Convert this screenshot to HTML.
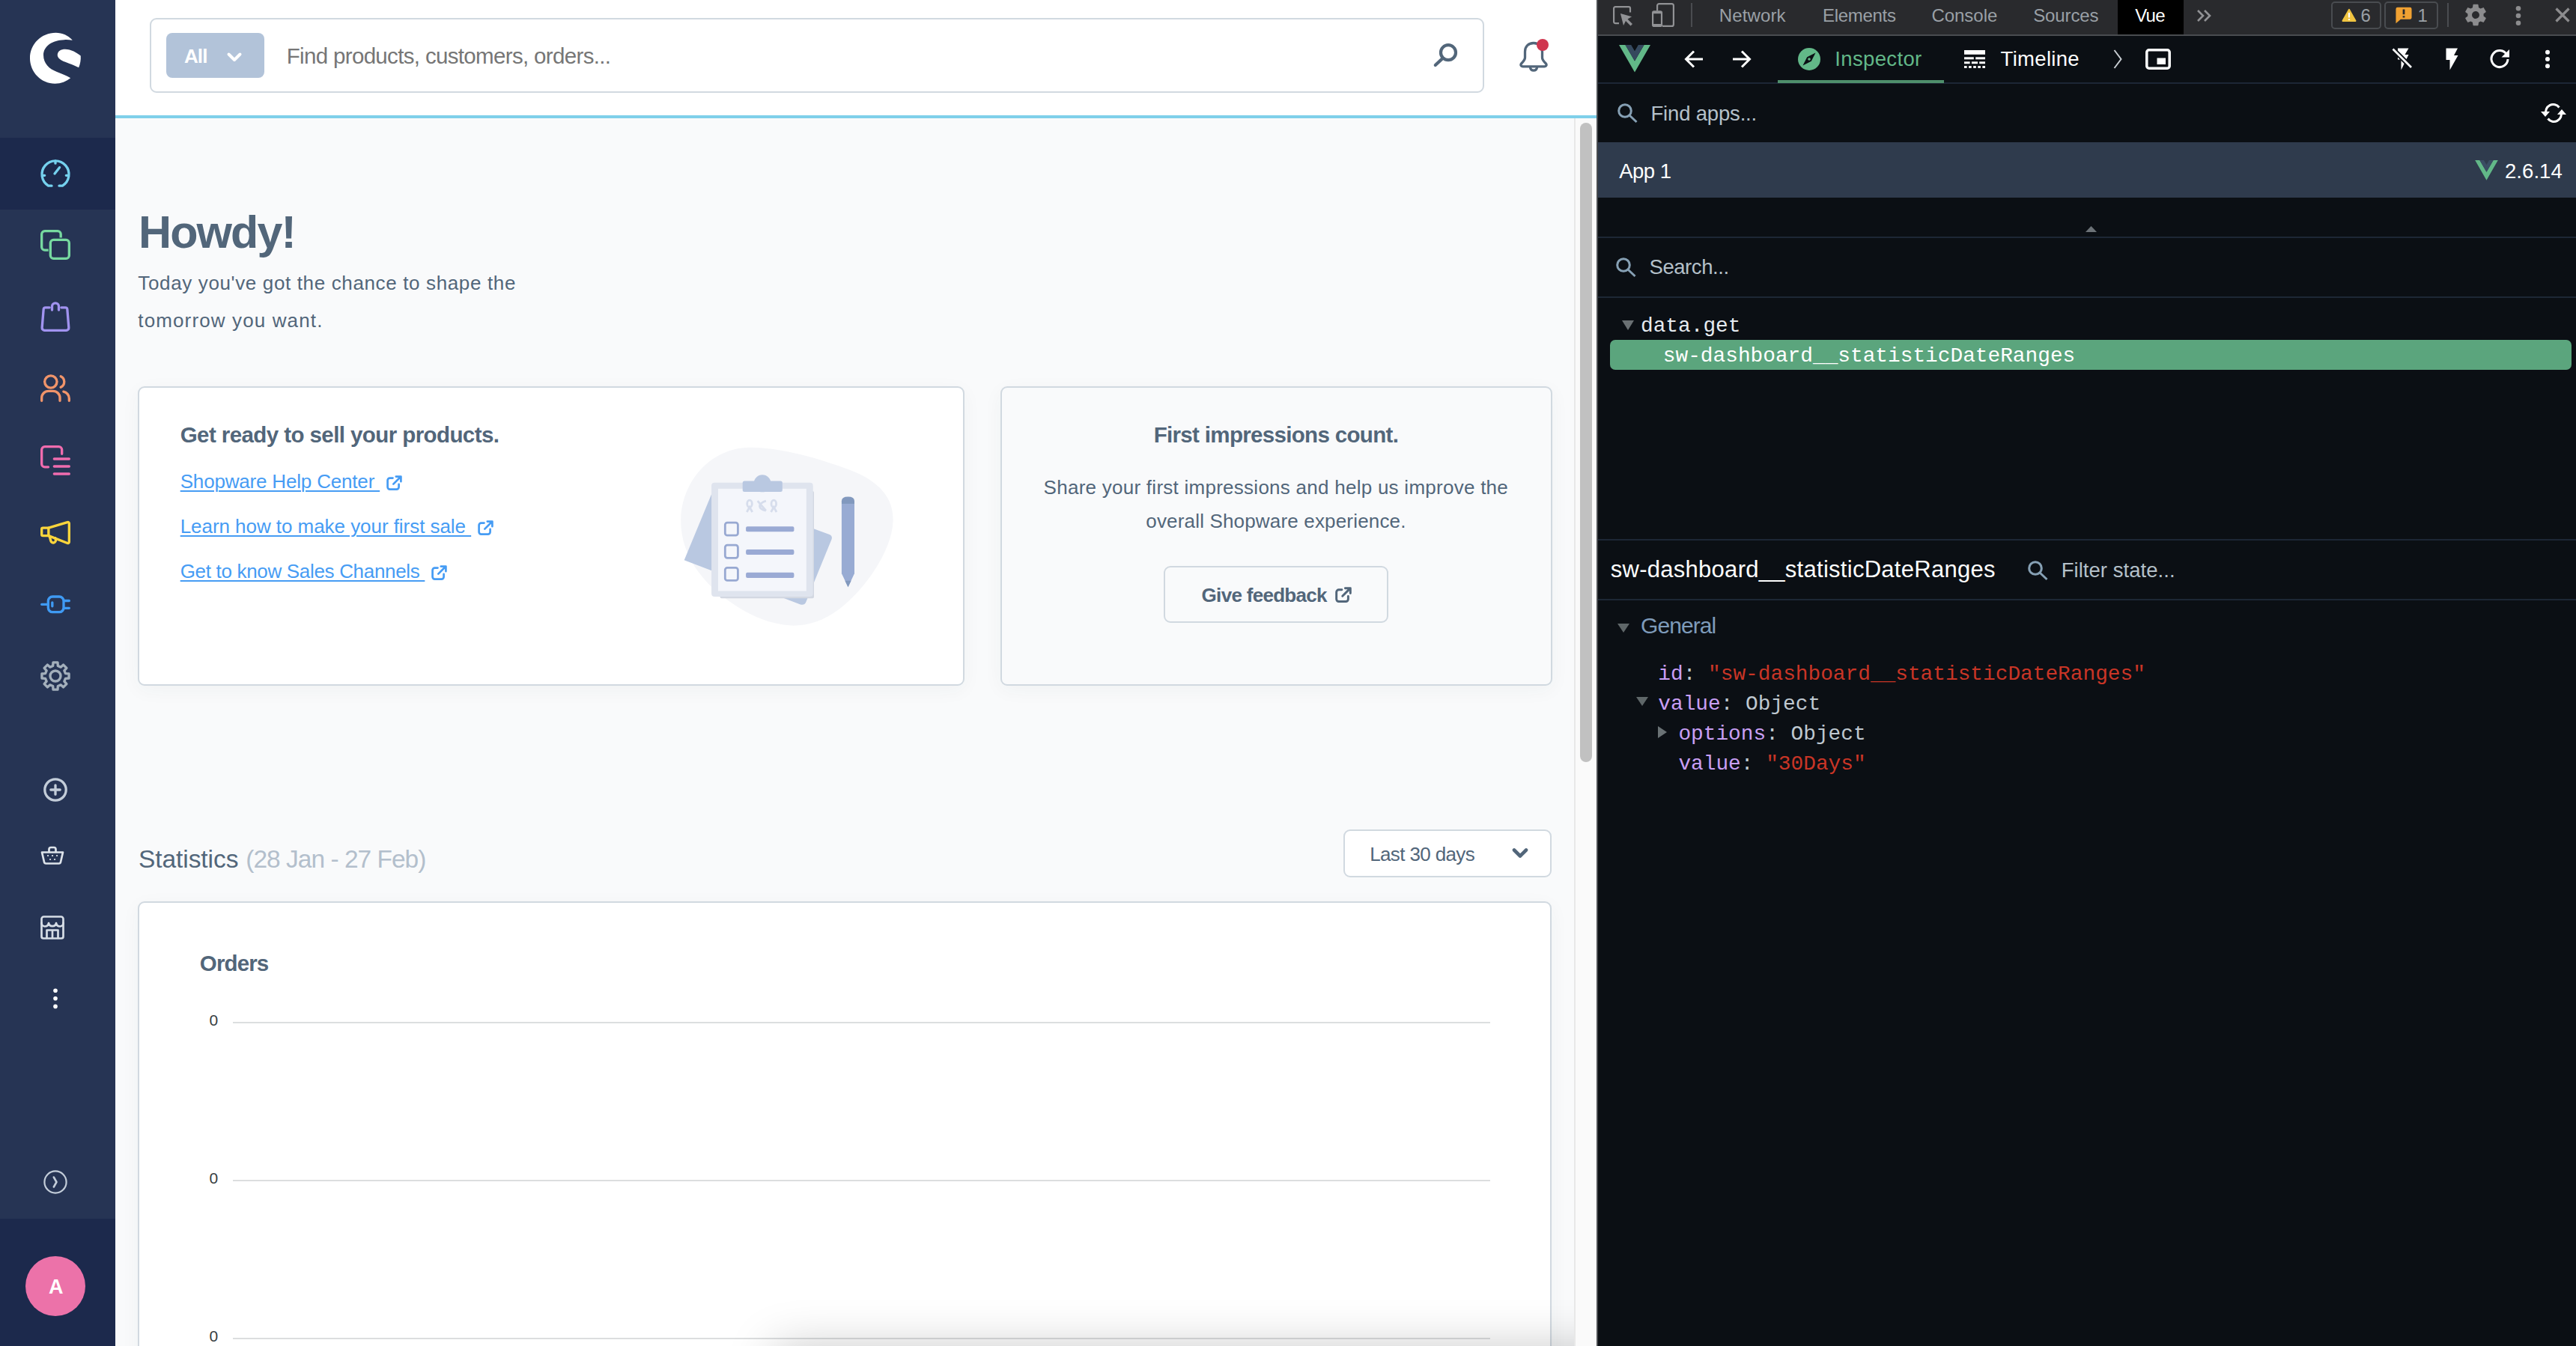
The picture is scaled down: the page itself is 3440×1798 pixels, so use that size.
<!DOCTYPE html>
<html lang="en">
<head>
<meta charset="utf-8">
<title>Shopware Administration</title>
<style>
*{box-sizing:border-box;margin:0;padding:0}
html,body{width:3440px;height:1798px;overflow:hidden;background:#f9fafb}
body{position:relative;font-family:"Liberation Sans",sans-serif;color:#52667a}
.a{position:absolute}
.t{position:absolute;white-space:pre;line-height:1;font-weight:400;display:block}
.sans{font-family:"Liberation Sans",sans-serif}
.mono{font-family:"Liberation Mono",monospace}
svg{position:absolute;overflow:visible}
/* ---------- admin ---------- */
#sidebar{left:0;top:0;width:154px;height:1798px;background:#263454}
#sb-active{left:0;top:184px;width:154px;height:96px;background:#1c294c}
#sb-user{left:0;top:1628px;width:154px;height:170px;background:#1c294c}
#avatar{left:34px;top:1678px;width:80px;height:80px;border-radius:50%;background:#ec72a9}
#topbar{left:154px;top:0;width:1978px;height:154px;background:#fff}
#topline{left:154px;top:154px;width:1978px;height:4px;background:#7fd0ea}
#search{left:200px;top:24px;width:1782px;height:100px;border:2px solid #d1d9e0;border-radius:9px;background:#fff}
#allbtn{left:222px;top:44px;width:131px;height:60px;border-radius:8px;background:#b2c3d9}
.card{border:2px solid #d1d9e0;border-radius:9px;box-shadow:0 6px 26px rgba(40,60,80,.045)}
#card1{left:184px;top:516px;width:1104px;height:400px;background:#fff}
#card2{left:1336px;top:516px;width:737px;height:400px;background:#f9fafb}
#fbbtn{left:1554px;top:756px;width:300px;height:76px;border:2px solid #d1d9e0;border-radius:9px;background:#f9fafb}
#select{left:1794px;top:1108px;width:278px;height:64px;border:2px solid #d1d9e0;border-radius:9px;background:#fff}
#card3{left:184px;top:1204px;width:1888px;height:700px;background:#fff}
.grid{left:311px;width:1679px;height:2px;background:#dcdedf}
#sbtrack{left:2102px;top:158px;width:30px;height:1640px;background:#fafafa;border-left:2px solid #e8e8e8}
#sbthumb{left:2110px;top:164px;width:16px;height:854px;border-radius:8px;background:#c1c1c1}
#botclip{left:154px;top:1598px;width:1948px;height:200px;overflow:hidden}
#botshadow{left:888px;top:210px;width:1300px;height:60px;box-shadow:0 0 64px 8px rgba(0,0,0,.22)}
/* ---------- devtools ---------- */
#dt{left:2132px;top:0;width:1308px;height:1798px;background:#0b0f14}
#dt-tabs{left:2132px;top:0;width:1308px;height:46px;background:#292a2d}
#dt-tabs-b{left:2132px;top:46px;width:1308px;height:2px;background:#494c50}
#dt-vue{left:2828px;top:0;width:88px;height:46px;background:#000}
.badge{top:2px;height:37px;border:2px solid #494c50;border-radius:5px}
.vdiv{width:2px;background:#4a4c50}
.hline{left:2134px;width:1306px;height:2px;background:#1d2735}
#dt-lb{left:2132px;top:0;width:2px;height:1798px;background:#494c50}
#dt-ul{left:2374px;top:107px;width:222px;height:4px;background:#4f8f6c}
#dt-app{left:2134px;top:190px;width:1306px;height:74px;background:#2f3b4d}
#dt-sel{left:2150px;top:454px;width:1284px;height:40px;border-radius:7px;background:#5ba57d}
</style>
</head>
<body>
<!-- ===== Shopware administration ===== -->
<div id="sw-admin">
<main id="sw-page">
<div class="a card" id="card1"></div>
<div class="a card" id="card2"></div>
<!-- illustration -->
<svg style="left:0;top:0" width="3440" height="1798" viewBox="0 0 3440 1798">
<path d="M 1000.6,597.8 C 1041.5,597.1 1097.2,613.4 1134.3,627.6 C 1175.2,643.2 1193.0,665.5 1192.6,695.2 C 1191.9,732.3 1158.5,784.3 1121.3,813.3 C 1099.0,830.4 1076.7,836.3 1056.3,835.6 C 1022.9,833.4 993.2,818.5 963.4,795.5 C 928.2,767.6 908.5,732.3 909.2,693.3 C 910.7,643.2 948.6,598.6 1000.6,597.8 Z" fill="#f5f6f9"/>
<path d="M 950.1,660.3 L 913.7,748.3 L 1068.9,807.4 Q 1074.1,809.2 1076.4,804.0 L 1110.5,720.4 Q 1112.0,716.0 1107.6,714.1 L 985.7,669.2 Z" fill="#b9c8e1"/>
<rect x="961.6" y="656.0" width="125.4" height="143.2" rx="2" fill="#d3d8e2" />
<rect x="950.1" y="644.7" width="135.6" height="152.3" rx="4" fill="#dfe4ee" />
<rect x="959.0" y="652.8" width="117.8" height="136.7" rx="0" fill="#f4f6fb" />
<circle cx="1018.1" cy="645.8" r="11.5" fill="#b9c8e1"/>
<rect x="991.7" y="642.4" width="53.1" height="14.5" rx="2.5" fill="#b9c8e1" />
<ellipse cx="1001.0" cy="672.9" rx="3.3" ry="4.8" fill="none" stroke="#d6ddec" stroke-width="2.8"/>
<path d="M997.3,684.0 L1001.0,677.3 L1004.7,684.0" fill="none" stroke="#d6ddec" stroke-width="2.8"/>
<ellipse cx="1033.3" cy="672.9" rx="3.3" ry="4.8" fill="none" stroke="#d6ddec" stroke-width="2.8"/>
<path d="M1029.6,684.0 L1033.3,677.3 L1037.0,684.0" fill="none" stroke="#d6ddec" stroke-width="2.8"/>
<path d="M1011.7,669.2 L1022.9,682.2 M1022.9,669.2 C1011.7,672.9 1011.7,679.6 1022.9,682.2" fill="none" stroke="#d6ddec" stroke-width="2.8"/>
<rect x="968.3" y="698.1" width="17.1" height="17.1" rx="3" fill="#f4f6fb" stroke="#98a9d2" stroke-width="2.8"/>
<rect x="996.1" y="703.2" width="64.3" height="7.1" rx="2" fill="#9aaad4" />
<rect x="968.3" y="728.2" width="17.1" height="17.1" rx="3" fill="#f4f6fb" stroke="#98a9d2" stroke-width="2.8"/>
<rect x="996.1" y="734.0" width="64.3" height="7.1" rx="2" fill="#9aaad4" />
<rect x="968.3" y="758.3" width="17.1" height="17.1" rx="3" fill="#f4f6fb" stroke="#98a9d2" stroke-width="2.8"/>
<rect x="996.1" y="764.8" width="64.3" height="7.1" rx="2" fill="#9aaad4" />
<path d="M1123.9,672.9 V669.2 Q1123.9,663.6 1132.5,663.6 Q1141.0,663.6 1141.0,669.2 V672.9Z" fill="#8299be"/>
<rect x="1123.9" y="672.9" width="17.1" height="93.6" rx="0" fill="#98abd3" />
<path d="M1123.9,766.1 H1141.0 L1132.5,784.3Z" fill="#98abd3"/>
<path d="M1128.4,775.8 H1136.6 L1132.5,784.3Z" fill="#8299be"/>
</svg>

<div class="a" id="fbbtn"></div>
<div class="a" id="select"></div>
<div class="a card" id="card3"></div>
<div class="a grid" style="top:1365px"></div>
<div class="a grid" style="top:1576px"></div>
<div class="a grid" style="top:1787px"></div>
<div class="a" id="botclip"><div class="a" id="botshadow"></div></div>
<div class="a" id="sbtrack"></div>
<div class="a" id="sbthumb"></div>
</main>
<header id="sw-header">
<div class="a" id="topbar"></div>
<div class="a" id="topline"></div>
<div class="a" id="search"></div>
<div class="a" id="allbtn"></div>
</header>
<aside id="sw-sidebar">
<div class="a" id="sidebar"></div>
<div class="a" id="sb-active"></div>
<div class="a" id="sb-user"></div>
<div class="a" id="avatar"></div>
</aside>
<!-- shopware logo -->
<svg style="left:24px;top:30px" width="100" height="100" viewBox="0 0 1346 1346"><path fill="#fff" d="M975 312C900 235 800 185 680 185 420 185 215 390 215 642c0 253 205 458 450 458 110 0 205-40 280-100-65-40-155-75-245-110C560 835 458 740 458 590c0-170 162-270 372-278 50-2 100 0 145 6zM710 585c0-70 60-105 140-105 100 0 210 60 277 120 6 70-7 145-35 212-62-32-152-67-242-102-80-30-140-70-140-125z"/></svg>
<!-- main menu icons (24u = 40px) -->
<svg style="left:54px;top:211px" width="40" height="40" viewBox="0 0 24 24" fill="none" stroke="#75d1ee" stroke-width="2" stroke-linecap="round" stroke-linejoin="round"><path d="M9 22.300H6.300A10.800 10.800 0 1 1 17.700 22.300H15"/><path d="M12 2.500v1.800M1.800 14h1.600M22.200 14h-1.600M11.400 12.600l3.900-5"/></svg>
<svg style="left:54px;top:307px" width="40" height="40" viewBox="0 0 24 24" fill="none" stroke="#77d9a0" stroke-width="2" stroke-linejoin="round"><path d="M6.400 16.300H3.500a2.500 2.500 0 0 1-2.500-2.500V3.500A2.500 2.500 0 0 1 3.500 1h10.300a2.500 2.500 0 0 1 2.500 2.500v2.800"/><rect x="8" y="8" width="15" height="15" rx="2.500"/></svg>
<svg style="left:54px;top:403px" width="40" height="40" viewBox="0 0 24 24" fill="none" stroke="#a193f0" stroke-width="2" stroke-linecap="round" stroke-linejoin="round"><path d="M7.300 4.700H4a1.500 1.500 0 0 0-1.500 1.400L1.300 20.800A2 2 0 0 0 3.300 23h17.400a2 2 0 0 0 2-2.200L21.500 6.100A1.500 1.500 0 0 0 20 4.700h-3.300"/><path d="M9.300 6.600V3.800a2.700 2.700 0 0 1 5.400 0v2.800"/></svg>
<svg style="left:54px;top:499px" width="40" height="40" viewBox="0 0 24 24" fill="none" stroke="#f0946a" stroke-width="2" stroke-linecap="round" stroke-linejoin="round"><circle cx="8.300" cy="6.600" r="4.900"/><path d="M1 21.800v-2.300a5.500 5.500 0 0 1 5.500-5.500h3.600a5.500 5.500 0 0 1 5.500 5.500v2.300"/><path d="M16.300 2.200a4.900 4.900 0 0 1 0 8.800"/><path d="M18.500 14.500a5.500 5.500 0 0 1 4.500 5.400v1.900"/></svg>
<svg style="left:54px;top:595px" width="40" height="40" viewBox="0 0 24 24" fill="none" stroke="#f06cae" stroke-width="2" stroke-linecap="round" stroke-linejoin="round"><path d="M6.300 17.300H3.500A2.500 2.500 0 0 1 1 14.800V3.500A2.500 2.500 0 0 1 3.500 1h11.200a2.500 2.500 0 0 1 2.500 2.500v3.300"/><path d="M11 10.800h12M11 16.800h12M11 22.800h12"/></svg>
<svg style="left:54px;top:691px" width="40" height="40" viewBox="0 0 24 24" fill="none" stroke="#fbd53c" stroke-width="2" stroke-linecap="round" stroke-linejoin="round"><path d="M6.500 8.500H2a1 1 0 0 0-1 1v4.300a1 1 0 0 0 1 1h4.500z"/><path d="M6.500 8.500L21.600 4a1 1 0 0 1 1.400 1v14.800a1 1 0 0 1-1.400.9L6.500 14.800"/><path d="M7.300 15.200l1 3.700a2 2 0 0 0 2.500 1.400 2 2 0 0 0 1.400-2.500l-.3-1.200"/></svg>
<svg style="left:54px;top:787px" width="40" height="40" viewBox="0 0 24 24" fill="none" stroke="#3f9af3" stroke-width="2" stroke-linecap="round" stroke-linejoin="round"><rect x="6.200" y="6" width="12.400" height="12.400" rx="3.500"/><path d="M1 12.200h5M18.800 9.300H23M18.800 15.200H23M9.500 10.700v3"/></svg>
<svg style="left:54px;top:883px" width="40" height="40" viewBox="0 0 24 24" fill="none" stroke="#a3afbb" stroke-width="2" stroke-linejoin="round"><path d="M10.00,3.94 L10.19,1.15 L13.81,1.15 L14.00,3.94 L16.28,4.89 L18.40,3.05 L20.95,5.60 L19.11,7.72 L20.06,10.00 L22.85,10.19 L22.85,13.81 L20.06,14.00 L19.11,16.28 L20.95,18.40 L18.40,20.95 L16.28,19.11 L14.00,20.06 L13.81,22.85 L10.19,22.85 L10.00,20.06 L7.72,19.11 L5.60,20.95 L3.05,18.40 L4.89,16.28 L3.94,14.00 L1.15,13.81 L1.15,10.19 L3.94,10.00 L4.89,7.72 L3.05,5.60 L5.60,3.05 L7.72,4.89Z"/><circle cx="12" cy="12" r="4.200"/></svg>
<!-- secondary icons -->
<svg style="left:58px;top:1039px" width="32" height="32" viewBox="0 0 32 32" fill="none" stroke="#c3cdd9" stroke-width="3.300" stroke-linecap="round"><circle cx="16" cy="16" r="14.200"/><path d="M16 9.800v12.400M9.800 16h12.400"/></svg>
<svg style="left:54px;top:1130px" width="32" height="26" viewBox="0 0 32 26" fill="none" stroke="#dde3ea" stroke-width="2.700" stroke-linecap="round" stroke-linejoin="round"><path d="M2 8.500h28l-3 13a2.500 2.500 0 0 1-2.400 2H7.400A2.500 2.500 0 0 1 5 21.500z"/><path d="M11.500 8V4.500a2.500 2.500 0 0 1 2.500-2.500h4a2.500 2.500 0 0 1 2.500 2.500V8"/><path stroke-width="2.200" d="M10 13h.1M16 13h.1M22 13h.1M13 18h.1M19 18h.1"/></svg>
<svg style="left:54px;top:1223px" width="32" height="32" viewBox="0 0 32 32" fill="none" stroke="#d6dde6" stroke-width="2.700" stroke-linejoin="round" stroke-linecap="round"><path d="M4.500 1.500h23a3 3 0 0 1 3 3V28a2.500 2.500 0 0 1-2.500 2.500H4A2.500 2.500 0 0 1 1.500 28V4.500a3 3 0 0 1 3-3z"/><path d="M1.500 10c0 6 8.500 6 9.500 0 .8 5.500 9.200 5.500 10 0 1 6 9.500 6 9.500 0"/><path d="M8.500 30V19.500h15V30M16 19.500V30"/></svg>
<svg style="left:70px;top:1319px" width="8" height="30" viewBox="0 0 8 30" fill="#fff"><circle cx="4" cy="4.200" r="2.800"/><circle cx="4" cy="14.800" r="2.800"/><circle cx="4" cy="25.400" r="2.800"/></svg>
<svg style="left:58px;top:1563px" width="32" height="32" viewBox="0 0 32 32" fill="none" stroke="#c3cdd9" stroke-width="2.200" stroke-linecap="round" stroke-linejoin="round"><circle cx="16" cy="16" r="14.600"/><path stroke-width="2.600" d="M13.800 9.500l3.700 6.500-3.700 6.500"/></svg>
<!-- top bar icons -->
<svg style="left:303px;top:70px" width="20" height="13" viewBox="0 0 20 13" fill="none" stroke="#fff" stroke-width="4" stroke-linecap="round" stroke-linejoin="round"><path d="M2.500 2.500L10 10l7.500-7.500"/></svg>
<svg style="left:1914px;top:56px" width="34" height="34" viewBox="0 0 34 34" fill="none" stroke="#52667a" stroke-width="4.200" stroke-linecap="round"><circle cx="20" cy="14.200" r="10"/><path d="M12.800 21.600L2.800 31"/></svg>
<svg style="left:2026px;top:54px" width="44" height="44" viewBox="0 0 44 44" fill="none" stroke="#52667a" stroke-width="3.300" stroke-linecap="round" stroke-linejoin="round"><path d="M22 3.500c-7 0-11.500 4.500-11.500 11.500v8c0 3-2 5-4.500 7.500-2 2-1 4.300 1.500 4.300h29c2.500 0 3.500-2.300 1.500-4.300C35.500 28 33.500 26 33.500 23v-8c0-7-4.500-11.500-11.500-11.500z"/><path d="M17.500 36.500a4.600 4.600 0 0 0 9 0"/></svg>
<svg style="left:2052px;top:52px" width="16" height="16" viewBox="0 0 16 16"><circle cx="8" cy="8" r="8" fill="#d0364f"/></svg>
<!-- external link icons -->
<svg style="left:516px;top:635px" width="21" height="20" viewBox="0 0 21 20" fill="none" stroke="#469cf4" stroke-width="2.700" stroke-linecap="round" stroke-linejoin="round"><path d="M8.500 3.600H4.600a3 3 0 0 0-3 3v9a3 3 0 0 0 3 3h9a3 3 0 0 0 3-3v-3.800"/><path d="M9.300 11.600l9.600-9.600M12.800 1.600h6.600v6.600"/></svg>
<svg style="left:638px;top:695px" width="21" height="20" viewBox="0 0 21 20" fill="none" stroke="#469cf4" stroke-width="2.700" stroke-linecap="round" stroke-linejoin="round"><path d="M8.500 3.600H4.600a3 3 0 0 0-3 3v9a3 3 0 0 0 3 3h9a3 3 0 0 0 3-3v-3.800"/><path d="M9.300 11.600l9.600-9.600M12.800 1.600h6.600v6.600"/></svg>
<svg style="left:576px;top:755px" width="21" height="20" viewBox="0 0 21 20" fill="none" stroke="#469cf4" stroke-width="2.700" stroke-linecap="round" stroke-linejoin="round"><path d="M8.500 3.600H4.600a3 3 0 0 0-3 3v9a3 3 0 0 0 3 3h9a3 3 0 0 0 3-3v-3.800"/><path d="M9.300 11.600l9.600-9.600M12.800 1.600h6.600v6.600"/></svg>
<svg style="left:1783px;top:784px" width="22" height="21" viewBox="0 0 21 20" fill="none" stroke="#52667a" stroke-width="2.800" stroke-linecap="round" stroke-linejoin="round"><path d="M8.500 3.600H4.600a3 3 0 0 0-3 3v9a3 3 0 0 0 3 3h9a3 3 0 0 0 3-3v-3.800"/><path d="M9.300 11.600l9.600-9.600M12.800 1.600h6.600v6.600"/></svg>
<svg style="left:2019px;top:1132px" width="22" height="16" viewBox="0 0 22 16" fill="none" stroke="#52667a" stroke-width="4.600" stroke-linecap="round" stroke-linejoin="round"><path d="M3 3.500l8 8 8-8"/></svg>

<span class="t sans" style="left:246.0px;top:62.3px;font-size:26px;color:#fff;font-weight:700;letter-spacing:-0.91px;">All</span>
<span class="t sans" style="left:382.7px;top:59.6px;font-size:29.5px;color:#767676;letter-spacing:-0.66px;">Find products, customers, orders...</span>
<h1 class="t sans" style="left:185.0px;top:279.5px;font-size:61px;color:#52667a;font-weight:700;letter-spacing:-1.88px;">Howdy!</h1>
<p class="t sans" style="left:184.3px;top:365.0px;font-size:26px;color:#52667a;letter-spacing:0.64px;">Today you&#x27;ve got the chance to shape the</p>
<p class="t sans" style="left:184.3px;top:415.2px;font-size:26px;color:#52667a;letter-spacing:1.13px;">tomorrow you want.</p>
<h3 class="t sans" style="left:240.7px;top:566.0px;font-size:29.5px;color:#52667a;font-weight:700;letter-spacing:-0.58px;">Get ready to sell your products.</h3>
<a href="#" class="t sans" style="left:240.7px;top:629.6px;font-size:26px;color:#469cf4;letter-spacing:-0.18px;text-decoration:underline;text-decoration-thickness:1.6px;text-underline-offset:3px;">Shopware Help Center </a>
<a href="#" class="t sans" style="left:240.7px;top:689.8px;font-size:26px;color:#469cf4;letter-spacing:-0.05px;text-decoration:underline;text-decoration-thickness:1.6px;text-underline-offset:3px;">Learn how to make your first sale </a>
<a href="#" class="t sans" style="left:240.7px;top:749.6px;font-size:26px;color:#469cf4;letter-spacing:-0.32px;text-decoration:underline;text-decoration-thickness:1.6px;text-underline-offset:3px;">Get to know Sales Channels </a>
<h3 class="t sans" style="left:1540.7px;top:566.0px;font-size:29.5px;color:#52667a;font-weight:700;letter-spacing:-0.67px;">First impressions count.</h3>
<p class="t sans" style="left:1393.6px;top:638.3px;font-size:26px;color:#52667a;letter-spacing:0.26px;">Share your first impressions and help us improve the</p>
<p class="t sans" style="left:1530.3px;top:682.5px;font-size:26px;color:#52667a;letter-spacing:0.17px;">overall Shopware experience.</p>
<span class="t sans" style="left:1604.6px;top:781.6px;font-size:26px;color:#52667a;font-weight:700;letter-spacing:-0.70px;">Give feedback</span>
<h2 class="t sans" style="left:185.0px;top:1131.3px;font-size:33.5px;color:#52667a;letter-spacing:-0.07px;">Statistics</h2>
<span class="t sans" style="left:328.3px;top:1131.3px;font-size:33.5px;color:#b3bfcc;letter-spacing:-0.99px;">(28 Jan - 27 Feb)</span>
<span class="t sans" style="left:1829.2px;top:1128.2px;font-size:26px;color:#52667a;letter-spacing:-0.63px;">Last 30 days</span>
<h4 class="t sans" style="left:266.8px;top:1272.4px;font-size:29.5px;color:#52667a;font-weight:700;letter-spacing:-0.86px;">Orders</h4>
<span class="t sans" style="left:279.5px;top:1351.5px;font-size:21px;color:#373d3f;">0</span>
<span class="t sans" style="left:279.5px;top:1562.5px;font-size:21px;color:#373d3f;">0</span>
<span class="t sans" style="left:279.5px;top:1773.5px;font-size:21px;color:#373d3f;">0</span>
<span class="t sans" style="left:65.0px;top:1706.2px;font-size:27px;color:#fff;font-weight:700;">A</span>
</div>
<!-- ===== DevTools ===== -->
<section id="devtools">
<div class="a" id="dt"></div>
<div class="a" id="dt-tabs"></div>
<div class="a" id="dt-tabs-b"></div>
<div class="a" id="dt-lb"></div>
<div class="a" id="dt-vue"></div>
<div class="a badge" style="left:3113px;width:67px"></div>
<div class="a badge" style="left:3184px;width:72px"></div>
<div class="a vdiv" style="left:2258px;top:4px;height:32px"></div>
<div class="a vdiv" style="left:3268px;top:4px;height:32px"></div>
<div class="a hline" style="top:110px"></div>
<div class="a" id="dt-ul"></div>
<div class="a" id="dt-app"></div>
<div class="a hline" style="top:316px"></div>
<div class="a hline" style="top:396px"></div>
<div class="a" id="dt-sel"></div>
<div class="a hline" style="top:720px"></div>
<div class="a hline" style="top:800px"></div>
<!-- chrome devtools toolbar icons -->
<svg style="left:2153px;top:8px" width="28" height="28" viewBox="0 0 28 28" fill="none" stroke="#919295" stroke-width="2.200"><path d="M9 23.100H4.100a2 2 0 0 1-2-2V3.100a2 2 0 0 1 2-2H22a2 2 0 0 1 2 2V8.500"/><path fill="#919295" stroke="none" d="M10.900 10l15.200 4.200-5.600 3.300 6.500 6.500-2.500 2.500-6.500-6.500-3 5.900z"/></svg>
<svg style="left:2205px;top:4px" width="32" height="32" viewBox="0 0 32 32" fill="none" stroke="#919295" stroke-width="2.200"><path d="M8.100 10.500V3.600a2.500 2.500 0 0 1 2.500-2.500h16.800a2.500 2.500 0 0 1 2.500 2.500v24.800a2.500 2.500 0 0 1-2.500 2.500H15"/><rect x="1" y="10.200" width="14.100" height="21.800" rx="2.800" fill="#919295" stroke="none"/><rect x="3.200" y="14.200" width="9.700" height="13.800" fill="#292a2d" stroke="none"/></svg>
<svg style="left:2933px;top:12px" width="20" height="18" viewBox="0 0 20 18" fill="none" stroke="#919295" stroke-width="2.600" stroke-linejoin="miter"><path d="M2 2l7 7-7 7M11 2l7 7-7 7"/></svg>
<svg style="left:3127px;top:11px" width="20" height="18" viewBox="0 0 20 18"><path fill="#f0c440" d="M10 .8a1.200 1.200 0 0 1 1 .6l8.300 14.800a1.200 1.200 0 0 1-1 1.800H1.700a1.200 1.200 0 0 1-1-1.800L9 1.400a1.200 1.200 0 0 1 1-.6z"/><path d="M10 6v6.500M10 14.300v1.600" stroke="#fff" stroke-width="2.200" fill="none"/></svg>
<svg style="left:3199px;top:8.500px" width="22" height="22.500" viewBox="0 0 24 24"><path fill="#f0a132" d="M3 .500h18a2.500 2.500 0 0 1 2.500 2.500v12.500a2.500 2.500 0 0 1-2.500 2.500H7.500L.500 24V3A2.500 2.500 0 0 1 3 .5z"/><path d="M12 3.500v7.500M12 13v2.600" stroke="#292a2d" stroke-width="3" fill="none"/></svg>
<svg style="left:3289px;top:3px" width="34" height="34" viewBox="0 0 24 24"><path fill="#8c8c8e" fill-rule="evenodd" d="M19.430 12.980c.040-.320.070-.640.070-.980s-.030-.660-.070-.980l2.110-1.650c.190-.150.240-.420.120-.640l-2-3.460c-.120-.220-.390-.300-.610-.220l-2.490 1c-.520-.400-1.080-.730-1.690-.980l-.380-2.650A.488.488 0 0 0 14 2h-4c-.250 0-.460.180-.490.420l-.380 2.650c-.610.250-1.170.590-1.690.980l-2.490-1c-.230-.090-.490 0-.610.220l-2 3.460c-.130.220-.070.490.120.640l2.110 1.650c-.040.320-.070.650-.070.980s.030.660.070.980l-2.110 1.650c-.190.150-.240.420-.120.640l2 3.460c.120.220.390.300.610.220l2.490-1c.520.400 1.080.730 1.690.980l.380 2.650c.030.240.240.420.490.420h4c.250 0 .460-.180.490-.420l.380-2.650c.610-.250 1.170-.590 1.690-.980l2.490 1c.230.090.490 0 .610-.220l2-3.460c.120-.220.070-.490-.120-.640l-2.110-1.650zM12 15.500c-1.930 0-3.500-1.570-3.500-3.500s1.570-3.500 3.500-3.500 3.500 1.570 3.500 3.500-1.570 3.500-3.500 3.500z"/></svg>
<svg style="left:3359px;top:7px" width="8" height="28" viewBox="0 0 8 28" fill="#8c8c8e"><circle cx="4" cy="4.300" r="3.300"/><circle cx="4" cy="14" r="3.300"/><circle cx="4" cy="23.700" r="3.300"/></svg>
<svg style="left:3412px;top:10px" width="20" height="20" viewBox="0 0 20 20" fill="none" stroke="#8c8c8e" stroke-width="3.200"><path d="M1.500 1.500l17 17M18.500 1.500l-17 17"/></svg>
<!-- vue devtools header -->
<svg style="left:2162px;top:60px" width="42" height="37" viewBox="0 0 42 37"><path fill="#62b888" d="M0 0h8.500L21 21.500 33.500 0H42L21 36.500z"/><path fill="#35495e" d="M8.500 0h7.700L21 8.300 25.800 0h7.700L21 21.500z"/></svg>
<svg style="left:2249px;top:67px" width="26" height="24" viewBox="0 0 26 24" fill="none" stroke="#fff" stroke-width="3"><path d="M25 12H3M13 1.500L2.500 12 13 22.500"/></svg>
<svg style="left:2313px;top:67px" width="26" height="24" viewBox="0 0 26 24" fill="none" stroke="#fff" stroke-width="3"><path d="M1 12h22M13 1.500L23.500 12 13 22.500"/></svg>
<svg style="left:2401px;top:64px" width="30" height="30" viewBox="0 0 30 30"><circle cx="15" cy="15" r="15" fill="#62b888"/><path fill="#0b0f14" d="M23.500 6.500L17.800 17.800 6.500 23.500 12.200 12.200z"/><circle cx="15" cy="15" r="1.800" fill="#62b888"/><path fill="#62b888" d="M6.500 23.500L12.200 12.200 17.800 17.800z" opacity="0"/></svg>
<svg style="left:2623px;top:67px" width="28" height="24" viewBox="0 0 28 24" fill="#fff"><rect x="0" y="0" width="28" height="5.800"/><rect x="0" y="9.300" width="12.800" height="3"/><rect x="15.200" y="9.300" width="12.800" height="3"/><rect x="0" y="15.300" width="7.600" height="2.900"/><rect x="9.900" y="15.300" width="8.200" height="2.900"/><rect x="20.200" y="15.300" width="7.800" height="2.900"/><rect x="0" y="21" width="3.600" height="3"/><rect x="6.100" y="21" width="3.600" height="3"/><rect x="12.200" y="21" width="3.600" height="3"/><rect x="18.300" y="21" width="3.600" height="3"/><rect x="24.400" y="21" width="3.600" height="3"/></svg>
<svg style="left:2822px;top:66px" width="12" height="26" viewBox="0 0 12 26" fill="none" stroke="#c8cdd2" stroke-width="2"><path d="M1.500 1l9 12-9 12"/></svg>
<svg style="left:2865px;top:65px" width="34" height="28" viewBox="0 0 34 28"><rect x="1.800" y="1.800" width="30.400" height="24.400" rx="3" fill="none" stroke="#fff" stroke-width="3.500"/><rect x="15.500" y="12.500" width="11.500" height="8.500" fill="#fff"/></svg>
<svg style="left:3194px;top:64px" width="28" height="30" viewBox="0 0 28 30" fill="#fff"><path d="M8 .500h14.500l-5 8.500h5L12.500 29.500V15.500H8z"/><path d="M1.500 1.500L26 26" stroke="#0b0f14" stroke-width="6.500" fill="none"/><path d="M1.500 1.500L26 26" stroke="#fff" stroke-width="2.600" fill="none"/></svg>
<svg style="left:3265px;top:64px" width="18" height="30" viewBox="0 0 18 30" fill="#fff"><path d="M1.500 .500H17l-5 9.500h5.500L6.500 29.500V16H1.500z"/></svg>
<svg style="left:3325px;top:65px" width="27" height="27" viewBox="0 0 27 27" fill="none" stroke="#fff" stroke-width="3"><path d="M22.500 8A11 11 0 1 0 24 14"/><path fill="#fff" stroke="none" d="M26 1v10.500H15.500z"/></svg>
<svg style="left:3398px;top:66px" width="8" height="26" viewBox="0 0 8 26" fill="#fff"><circle cx="4" cy="3.700" r="3"/><circle cx="4" cy="13" r="3"/><circle cx="4" cy="22.300" r="3"/></svg>
<!-- search icons -->
<svg style="left:2160px;top:138px" width="27" height="26" viewBox="0 0 27 26" fill="none" stroke="#86a0b4" stroke-width="3"><circle cx="10" cy="10" r="8.300"/><path d="M16 16l9.500 9"/></svg>
<svg style="left:2158px;top:344px" width="27" height="26" viewBox="0 0 27 26" fill="none" stroke="#86a0b4" stroke-width="3"><circle cx="10" cy="10" r="8.300"/><path d="M16 16l9.500 9"/></svg>
<svg style="left:2708px;top:749px" width="27" height="26" viewBox="0 0 27 26" fill="none" stroke="#86a0b4" stroke-width="3"><circle cx="10" cy="10" r="8.300"/><path d="M16 16l9.500 9"/></svg>
<!-- sync icon -->
<svg style="left:3393px;top:137px" width="34" height="28" viewBox="0 0 34 28" fill="none" stroke="#fff" stroke-width="3"><path d="M7 15.500A10 10 0 0 1 24.500 6.500"/><path d="M27 12.500A10 10 0 0 1 9.500 21.500"/><path fill="#fff" stroke="none" d="M0 12h12l-6 7zM34 16H22l6-7z"/></svg>
<!-- small vue logo -->
<svg style="left:3305px;top:214px" width="31" height="27" viewBox="0 0 42 37"><path fill="#62b888" d="M0 0h8.500L21 21.500 33.500 0H42L21 36.500z"/><path fill="#3a4d63" d="M8.500 0h7.700L21 8.300 25.800 0h7.700L21 21.500z"/></svg>
<!-- triangles -->
<svg style="left:2785px;top:302px" width="15" height="8" viewBox="0 0 15 8"><path fill="#6c7277" d="M0 8L7.500 0 15 8z"/></svg>
<svg style="left:2166px;top:428px" width="16" height="13" viewBox="0 0 16 13"><path fill="#6a7073" d="M0 0h16L8 13z"/></svg>
<svg style="left:2160px;top:833px" width="16" height="12" viewBox="0 0 16 12"><path fill="#5f6769" d="M0 0h16L8 12z"/></svg>
<svg style="left:2185px;top:931px" width="16" height="12" viewBox="0 0 16 12"><path fill="#5f6769" d="M0 0h16L8 12z"/></svg>
<svg style="left:2214px;top:970px" width="12" height="16" viewBox="0 0 12 16"><path fill="#6a7275" d="M0 0v16l12-8z"/></svg>

<span class="t sans" style="left:2295.8px;top:9.0px;font-size:24px;color:#9aa0a6;letter-spacing:0.12px;">Network</span>
<span class="t sans" style="left:2434.1px;top:9.0px;font-size:24px;color:#9aa0a6;letter-spacing:-0.31px;">Elements</span>
<span class="t sans" style="left:2579.4px;top:9.0px;font-size:24px;color:#9aa0a6;letter-spacing:-0.02px;">Console</span>
<span class="t sans" style="left:2715.2px;top:9.0px;font-size:24px;color:#9aa0a6;letter-spacing:-0.11px;">Sources</span>
<span class="t sans" style="left:2851.2px;top:9.0px;font-size:24px;color:#fff;letter-spacing:-0.70px;">Vue</span>
<span class="t sans" style="left:3152.5px;top:9.0px;font-size:24px;color:#9aa0a6;">6</span>
<span class="t sans" style="left:3228.5px;top:9.0px;font-size:24px;color:#9aa0a6;">1</span>
<span class="t sans" style="left:2450.3px;top:65.4px;font-size:27.5px;color:#62b888;letter-spacing:0.35px;">Inspector</span>
<span class="t sans" style="left:2671.6px;top:65.4px;font-size:27.5px;color:#fff;letter-spacing:0.31px;">Timeline</span>
<span class="t sans" style="left:2204.5px;top:137.9px;font-size:27.5px;color:#b4c0c9;letter-spacing:-0.18px;">Find apps...</span>
<span class="t sans" style="left:2162.3px;top:215.3px;font-size:27.5px;color:#fff;letter-spacing:-0.54px;">App 1</span>
<span class="t sans" style="left:3345.0px;top:215.3px;font-size:27.5px;color:#fff;letter-spacing:0.06px;">2.6.14</span>
<span class="t sans" style="left:2202.5px;top:342.8px;font-size:27.5px;color:#b4c0c9;letter-spacing:-0.44px;">Search...</span>
<span class="t mono" style="left:2191.0px;top:421.9px;font-size:27.8px;color:#e6ebf0;">data.get</span>
<span class="t mono" style="left:2220.8px;top:461.9px;font-size:27.8px;color:#fff;">sw-dashboard__statisticDateRanges</span>
<span class="t sans" style="left:2150.7px;top:744.8px;font-size:31px;color:#fff;letter-spacing:0.28px;">sw-dashboard__statisticDateRanges</span>
<span class="t sans" style="left:2752.7px;top:747.8px;font-size:27.5px;color:#b4c0c9;letter-spacing:0.04px;">Filter state...</span>
<span class="t sans" style="left:2191.0px;top:821.2px;font-size:30px;color:#7e9bba;letter-spacing:-0.92px;">General</span>
<span class="t mono" style="left:2214.3px;top:886.8px;font-size:27.8px;color:#bfc8d0;"><span style="color:#c99ff5">id</span>: <span style="color:#c93526">"sw-dashboard__statisticDateRanges"</span></span>
<span class="t mono" style="left:2214.3px;top:926.8px;font-size:27.8px;color:#bfc8d0;"><span style="color:#c99ff5">value</span>: Object</span>
<span class="t mono" style="left:2241.4px;top:966.9px;font-size:27.8px;color:#bfc8d0;"><span style="color:#c99ff5">options</span>: Object</span>
<span class="t mono" style="left:2241.4px;top:1007.0px;font-size:27.8px;color:#bfc8d0;"><span style="color:#c99ff5">value</span>: <span style="color:#c93526">"30Days"</span></span>
</section>
<script>(function(){var w=window.innerWidth;if(w&&Math.abs(w-3440)>2){document.documentElement.style.zoom=w/3440;}})();</script>
</body>
</html>
